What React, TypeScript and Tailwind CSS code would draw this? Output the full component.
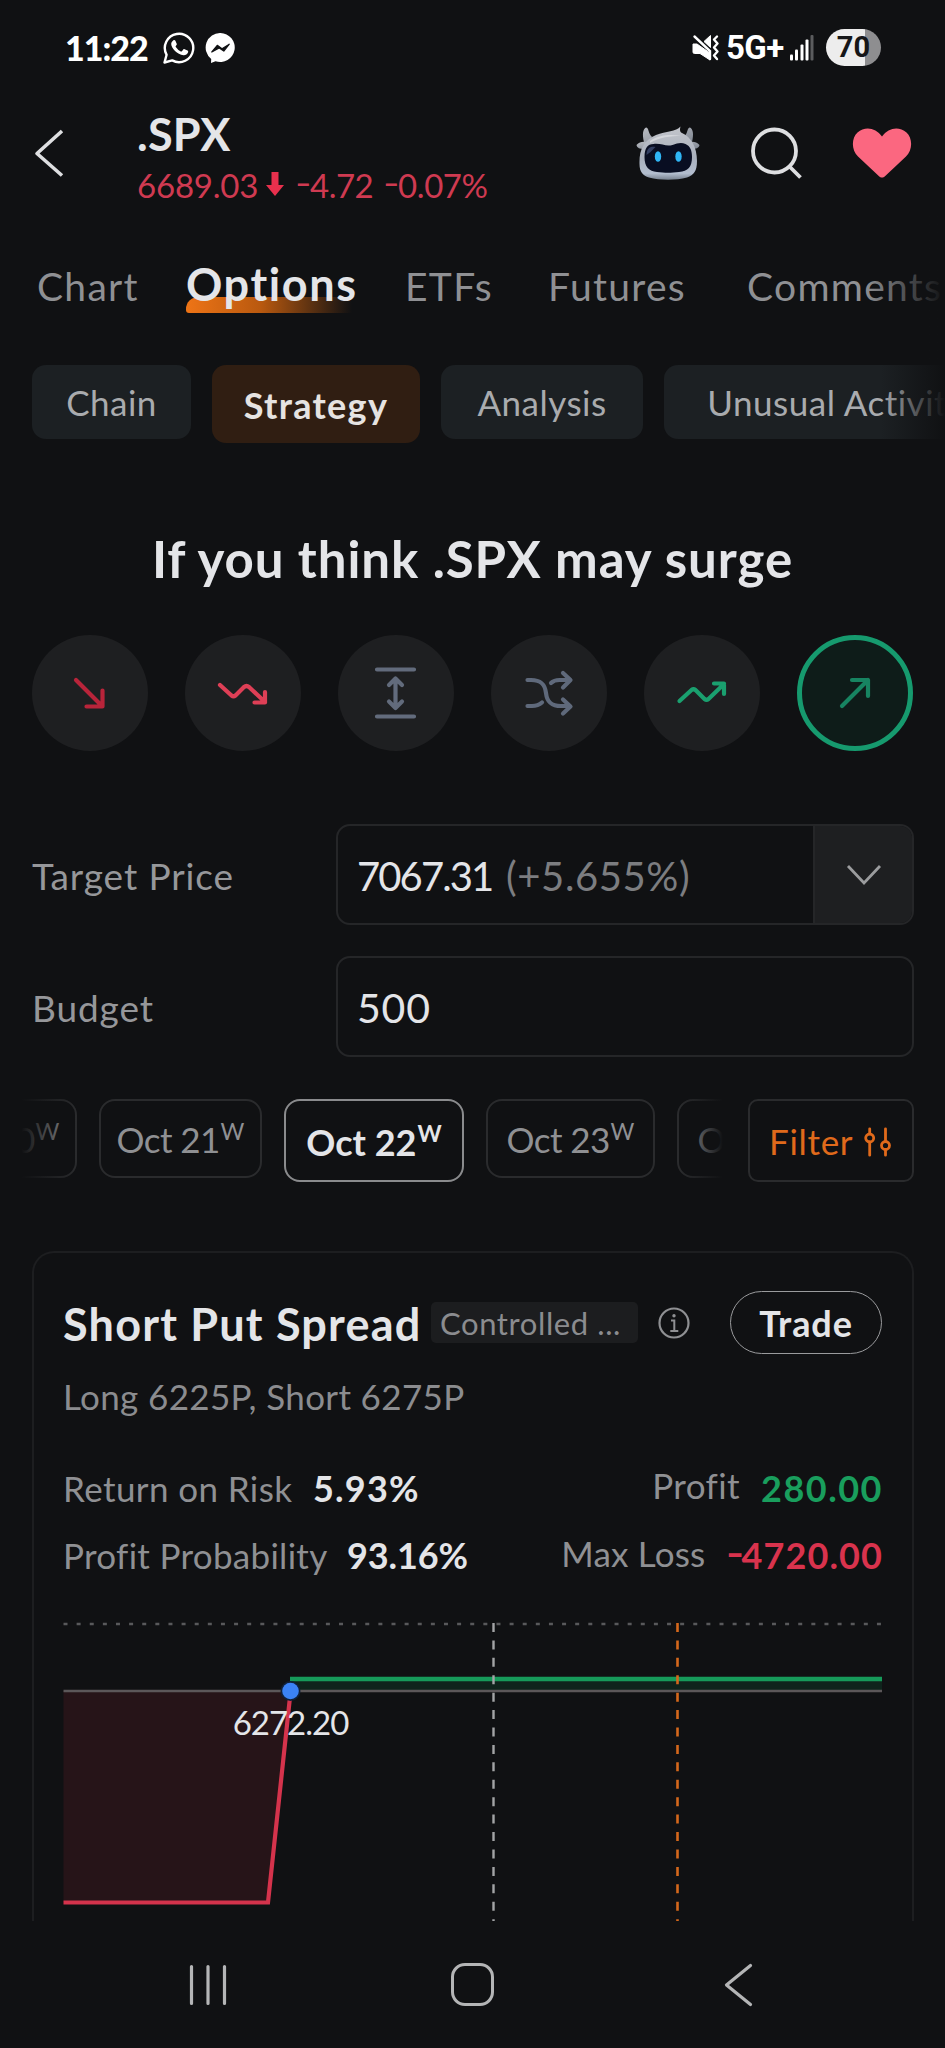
import React from "react";

const circle =
  "flex h-[116px] w-[116px] items-center justify-center rounded-full bg-[#1e1f21]";

function StatusBar() {
  return (
    <div className="flex h-[95px] items-center pl-[65px] pr-[64px] text-white">
      <span className="w-[98px] text-[34px] font-black leading-none tracking-[-1px]">11:22</span>
      <svg width="32" height="32" viewBox="0 0 32 32" fill="none">
        <path
          d="M1.5 30.5 3.6 22.8A14.2 14.2 0 1 1 9.2 28.4Z"
          stroke="#fff"
          strokeWidth="2.4"
          strokeLinejoin="round"
        />
        <path
          d="M10.2 8.4c.8-.7 1.8-.5 2.2.3l1.3 3c.3.7 0 1.2-.9 2.3-.3.4-.3.7 0 1.1a11 11 0 0 0 5 4.300c.5.2.8.1 1.100-.2l1.400-1.700c.4-.5.8-.5 1.300-.3l2.900 1.400c.8.4.8.8.5 1.900-.5 1.700-2.700 2.900-4.500 2.700-6.300-.8-12.100-6.600-12.300-11.200 0-1.500.9-2.800 2-3.600Z"
          fill="#fff"
        />
      </svg>
      <svg className="ml-[10px]" width="31" height="30" viewBox="0 0 31 30">
        <path
          d="M15.500 0a14.500 14.500 0 1 1-5 28.200L6 29.900l.2-4A14.500 14.500 0 0 1 15.500 0Z"
          fill="#fff"
        />
        <path
          d="M6.800 19 12.300 12.300 17 15.800 24.300 11.200 18.800 18.100 14.200 14.900Z"
          fill="#101113"
          stroke="#101113"
          strokeWidth="1.200"
          strokeLinejoin="round"
        />
      </svg>
      <div className="ml-auto flex items-center">
        <svg width="28" height="28" viewBox="0 0 28 28" fill="none" stroke="#fff">
          <path d="M1 10h4l13 9v7L8 19.500H2.500Q1 19.500 1 18Z" fill="#fff" strokeWidth="1" strokeLinejoin="round" />
          <path d="M12 7.500 18.500 1.500v12Z" fill="#fff" strokeWidth="1" strokeLinejoin="round" />
          <path d="M2.500 2.500 18 17v8" strokeWidth="2.400" strokeLinecap="round" />
          <path d="m25 2.500-3 3 3.500 4-3.500 4 3.500 4-3.500 4 3 3.500" strokeWidth="2.400" strokeLinecap="round" strokeLinejoin="round" />
        </svg>
        <span className="ml-[6px] w-[60px] font-[Roboto] text-[33px] font-bold leading-none tracking-[-0.6px]">5G+</span>
        <svg className="ml-[3px]" width="26" height="28" viewBox="0 0 26 28" fill="#fff">
          <rect x="1" y="20.500" width="3" height="6" rx="1" />
          <rect x="6" y="15.500" width="3" height="11" rx="1" />
          <rect x="11.500" y="10.500" width="3" height="16" rx="1" />
          <rect x="16.500" y="5.500" width="3" height="21" rx="1" />
          <rect x="21.500" y="1" width="3" height="25.500" rx="1" fill="#5b5c5e" />
        </svg>
        <div className="ml-[11px] flex h-[37px] w-[55px] items-center justify-center rounded-full bg-[linear-gradient(90deg,#ededed_70%,#8e8e90_70%)] font-[Roboto] text-[29px] font-bold leading-none text-[#151618]">
          70
        </div>
      </div>
    </div>
  );
}

function RobotIcon() {
  return (
    <svg width="64" height="54" viewBox="0 0 64 54">
      <defs>
        <linearGradient id="shell" x1="0" y1="0" x2="0" y2="1">
          <stop offset="0" stopColor="#c3c5cb" />
          <stop offset="0.6" stopColor="#a9b0bd" />
          <stop offset="0.88" stopColor="#b3becf" />
          <stop offset="1" stopColor="#77818f" />
        </linearGradient>
        <linearGradient id="horn" x1="0" y1="0" x2="1" y2="1">
          <stop offset="0" stopColor="#b9bcc2" />
          <stop offset="1" stopColor="#7d8490" />
        </linearGradient>
      </defs>
      <path d="M8 16C6 8 7 3 10 1.500c3 0 2 6 6 9.500l-5 8ZM56 16c2-8 1-13-2-14.500-3 0-2 6-6 9.500l5 8Z" fill="url(#horn)" />
      <path d="M.5 19C4 15 9 15 13 17l-5 6C4 23 1 22 .5 19ZM63.500 19C60 15 55 15 51 17l5 6c4 0 7-1 7.500-4Z" fill="url(#horn)" />
      <path
        d="M3.500 38C3 24 8 14 20 9 30 5 40 6 44.500.5 43.500 4 44 6 46 7c9 4 15 14 15 28 0 10-3 14-10 16.500-11 3-27 3-38 0C7 49.500 3.500 46 3.500 38Z"
        fill="url(#shell)"
      />
      <path d="M14 15c8-6 20-7 31-5-10 0-22 1-31 7Z" fill="#dfe1e5" opacity="0.7" />
      <path
        d="M8.500 31c0-9 3-13 9-13 8-1 12 3 19 1 5-2 9-3 13-1 5 2 6.500 7 6.500 13 0 10-4 14-13 15-8 1-14 1-22 0-8-1-12.500-5-12.500-15Z"
        fill="#090e22"
      />
      <path d="M10.500 29c0-7 4-9 9-8l-5 5Z" fill="#44537c" opacity="0.7" />
      <ellipse cx="22" cy="30.500" rx="3.200" ry="5.300" fill="#2fb5f5" />
      <ellipse cx="42.500" cy="30.500" rx="3.200" ry="5.300" fill="#2fb5f5" />
    </svg>
  );
}

function Header() {
  return (
    <header className="flex h-[116px] items-center pl-[34px] pr-[33px]">
      <svg width="31" height="50" viewBox="0 0 31 50" fill="none" stroke="#dedfe1" strokeWidth="3.600">
        <path d="M28 3 3 25.500 28 47.500" strokeLinejoin="round" />
      </svg>
      <div className="ml-[72px] mt-3 w-[499px]">
        <h1 className="relative top-[1px] text-[45px] font-bold leading-[52px] tracking-[0.2px] text-[#e4e5e8]">.SPX</h1>
        <div className="flex items-center text-[33px] leading-[52px] text-[#cf3a51]">
          <span className="w-[129px] tracking-[-0.2px]">6689.03</span>
          <svg width="18" height="24" viewBox="0 0 18 24" className="mb-[3px]">
            <path d="M5.500 0h7v13H18L9 24 0 13h5.500Z" fill="#e8304d" />
          </svg>
          <span className="ml-[11px] w-[88px] tracking-[-0.5px]"><Minus />4.72</span>
          <span className="tracking-[-0.4px]"><Minus />0.07%</span>
        </div>
      </div>
      <RobotIcon />
      <svg className="ml-[50px]" width="53" height="54" viewBox="0 0 53 54" fill="none" stroke="#dedfe1" strokeWidth="3.800">
        <circle cx="24.500" cy="25" r="21.500" />
        <path d="m39 40 11.500 11.500" />
      </svg>
      <svg className="ml-[49px]" width="60" height="50" viewBox="0 0 60 50">
        <path
          d="M30 49.500c-1.500 0-2.500-.8-3.500-1.800L6 28.500C-1 21.500-.5 10 5.500 4.500 13-2 23.500-.5 30 8.500 36.500-.5 47-2 54.500 4.500c6 5.500 6.500 17-.5 24L33.500 47.700c-1 1-2 1.800-3.500 1.800Z"
          fill="#fb6780"
        />
      </svg>
    </header>
  );
}

function Minus() {
  return <span className="inline-block w-[15px] origin-left -translate-y-[3px] scale-x-[1.35]">-</span>;
}

function Tabs() {
  return (
    <nav className="relative flex h-[154px] items-baseline overflow-hidden pl-[37px] pt-[43px] text-[39px] leading-[60px] tracking-[1.3px] text-[#8f9093]">
      <span className="w-[149px] shrink-0">Chart</span>
      <span className="relative w-[219px] shrink-0 text-[45px] font-bold tracking-[1.6px] text-[#e4e5e8]">
        <span className="absolute left-0 top-[43px] h-[16px] w-[166px] rounded-tl-[12px] rounded-bl-[3px] bg-[linear-gradient(90deg,#ee7416,#b9590f_45%,#101113)]" />
        <span className="relative">Options</span>
      </span>
      <span className="w-[143px] shrink-0">ETFs</span>
      <span className="w-[199px] shrink-0">Futures</span>
      <span className="shrink-0">Comments</span>
      <span className="absolute right-0 top-0 h-full w-[80px] bg-gradient-to-r from-[#101113]/0 to-[#101113]" />
    </nav>
  );
}

function Chips() {
  const chip = "flex h-[74px] shrink-0 items-center justify-center rounded-[14px] bg-[#1c2023]";
  return (
    <div className="relative flex h-[78px] items-start gap-[21px] overflow-hidden pl-[32px] text-[35px] leading-none tracking-[0.5px] text-[#a9abae]">
      <span className={`${chip} w-[159px]`}>Chain</span>
      <span className="flex h-[78px] w-[208px] shrink-0 items-center justify-center rounded-[14px] bg-[#301e12] pt-[2px] text-[36px] font-bold tracking-[1.3px] text-[#e6e3e1]">
        Strategy
      </span>
      <span className={`${chip} w-[202px]`}>Analysis</span>
      <span className={`${chip} w-[345px]`}>Unusual Activity</span>
      <span className="absolute right-0 top-0 h-full w-[64px] bg-gradient-to-r from-[#101113]/0 to-[#101113]" />
    </div>
  );
}

function Outlooks() {
  const line = { fill: "none", strokeWidth: 4.2, strokeLinecap: "round" as const, strokeLinejoin: "round" as const };
  return (
    <div className="flex justify-between px-[32px]">
      <div className={circle}>
        <svg width="116" height="116" viewBox="0 0 116 116" {...line} stroke="#b9243a">
          <path d="m44 45 26 26M54.500 71.500h16V55.500" />
        </svg>
      </div>
      <div className={circle}>
        <svg width="116" height="116" viewBox="0 0 116 116" {...line} stroke="#de3f56">
          <path d="m35 50 11.500 10.500q2 1.500 4 0L59 52q2.500-2 5 0l16 15M69.500 67.500H80V57" />
        </svg>
      </div>
      <div className={circle}>
        <svg width="116" height="116" viewBox="0 0 116 116" {...line} stroke="#626b7c">
          <path d="M39 34.500h37M39 81.500h37M57.500 44v28M51 50l6.500-6.500L64 50M51 66.500l6.500 6.500 6.500-6.500" />
        </svg>
      </div>
      <div className={circle}>
        <svg width="116" height="116" viewBox="0 0 116 116" {...line} stroke="#5f697b">
          <path d="M36.500 45H40C50 45 54 49 55 58S60 71 70 71h9M36.500 71H41q6 0 10-3.500M60 48q3-3 8.500-3H79M72 38l7.500 7-7.500 7.500M72 64.500l7.500 7-7.500 7" />
        </svg>
      </div>
      <div className={circle}>
        <svg width="116" height="116" viewBox="0 0 116 116" {...line} stroke="#1aa06f">
          <path d="m35.500 66 12-11q2-1.500 4 0l9 9q2 1.500 4 0L80 49M70 48.500h10V59" />
        </svg>
      </div>
      <div className="flex h-[116px] w-[116px] items-center justify-center rounded-full border-[5px] border-[#169a6e] bg-[#0e1c19]">
        <svg width="106" height="106" viewBox="5 5 106 106" {...line} stroke="#178461">
          <path d="m45 71 26-26M55 45h16v16" />
        </svg>
      </div>
    </div>
  );
}

function Fields() {
  return (
    <div className="mt-[73px] flex flex-col gap-[31px] pl-[32px] pr-[31px] text-[37px] leading-none text-[#96979a]">
      <div className="flex h-[101px] items-center">
        <span className="w-[304px] pt-[2px] tracking-[0.9px]">Target Price</span>
        <div className="flex h-full flex-1 overflow-hidden rounded-[14px] border-2 border-[#252628]">
          <div className="flex flex-1 items-center pl-[19px] pt-[2px] text-[40px]">
            <span className="w-[149px] tracking-[-1.9px] text-[#e4e5e8]">7067.31</span>
            <span className="tracking-[0.6px] text-[#7c7d80]">(+5.655%)</span>
          </div>
          <div className="flex w-[99px] items-center justify-center border-l-2 border-[#252628] bg-[#1e1f21]">
            <svg width="36" height="22" viewBox="0 0 36 22" fill="none" stroke="#9b9c9e" strokeWidth="2.800">
              <path d="m2 2 16 17L34 2" />
            </svg>
          </div>
        </div>
      </div>
      <div className="flex h-[101px] items-center">
        <span className="w-[304px] pt-[2px] tracking-[0.9px]">Budget</span>
        <div className="flex h-full flex-1 items-center rounded-[14px] border-2 border-[#252628] pl-[19px] pt-[2px] text-[41px] tracking-[0.8px] text-[#e4e5e8]">
          500
        </div>
      </div>
    </div>
  );
}

function Weekly({ bold = false }: { bold?: boolean }) {
  return (
    <span className={`relative top-[-8px] ml-[1px] text-[23px] tracking-normal ${bold ? "font-bold" : "font-normal"}`}>
      W
    </span>
  );
}

function Expirations() {
  const pill = "flex h-[79px] shrink-0 items-center justify-center rounded-[16px] border-2 border-[#2a2b2d] pt-[2px] tracking-[-0.6px]";
  return (
    <div className="mt-[42px] flex h-[83px] pr-[31px] text-[35px] leading-none text-[#8f9093]">
      <div className="relative flex w-[725px] items-start gap-[22px] overflow-hidden">
        <div className={`${pill} -ml-[86px] w-[163px]`}>Oct 20<Weekly /></div>
        <div className={`${pill} w-[163px]`}>Oct 21<Weekly /></div>
        <div className="flex h-[83px] w-[180px] shrink-0 items-center justify-center rounded-[16px] border-2 border-[#8a8b8d] pt-[2px] text-[36px] font-bold text-[#e4e5e8]">
          Oct 22<Weekly bold />
        </div>
        <div className={`${pill} w-[169px]`}>Oct 23<Weekly /></div>
        <div className={`${pill} w-[169px]`}>Oct 24<Weekly /></div>
        <span className="absolute left-0 top-0 h-full w-[77px] bg-[linear-gradient(90deg,#101113_28%,transparent)]" />
        <span className="absolute right-0 top-0 h-full w-[44px] bg-[linear-gradient(90deg,transparent,#101113_95%)]" />
      </div>
      <div className="ml-auto flex h-[83px] w-[166px] items-center rounded-[10px] border-2 border-[#2a2b2d] pl-[19px] pt-[2px] text-[35px] text-[#e06a1b]">
        <span className="w-[95px] tracking-[0.7px]">Filter</span>
        <svg width="28" height="30" viewBox="0 0 28 30" fill="none" stroke="#e06a1b" strokeWidth="2.800" strokeLinecap="round">
          <circle cx="5.700" cy="11" r="4" />
          <path d="M5.700 1.800v5M5.700 15v13.200" />
          <circle cx="21.500" cy="18.500" r="4" />
          <path d="M21.500 1.800v12.500M21.500 22.800v5.400" />
        </svg>
      </div>
    </div>
  );
}

function PayoffChart() {
  return (
    <svg className="-ml-[1px] block" width="822" height="333" viewBox="62 1588 822 333">
      <path d="M63.500 1624H883" stroke="#58595b" strokeWidth="2.600" strokeDasharray="4 9.120" />
      <path d="M63.500 1691H290L268 1902H63.500Z" fill="#261418" />
      <path d="M290 1679H882v12H290Z" fill="#0f241c" />
      <path d="M63.500 1691H882" stroke="#5b5759" strokeWidth="2.600" />
      <path d="M290 1679H882" stroke="#169a5a" strokeWidth="4.400" />
      <path d="M63.500 1902.500H268L290 1697" fill="none" stroke="#d5334c" strokeWidth="4.200" />
      <path d="M493.500 1623V1921" stroke="#a3a4a6" strokeWidth="2.400" strokeDasharray="9 8.420" />
      <path d="M677.500 1623V1921" stroke="#d5681c" strokeWidth="2.600" strokeDasharray="9 8.420" />
      <circle cx="290.500" cy="1691" r="10" fill="#10203a" />
      <circle cx="290.500" cy="1691" r="8.300" fill="#3b82f6" />
      <text x="290.500" y="1735" textAnchor="middle" fontSize="33" fill="#e4e5e8" letterSpacing="-1">
        6272.20
      </text>
    </svg>
  );
}

function StrategyCard() {
  return (
    <section className="mt-[69px] ml-[32px] h-[670px] w-[882px] overflow-hidden rounded-t-[22px] border-2 border-b-0 border-[#1d1e20] pl-[29px] pr-[30px] pt-[38px]">
      <div className="flex h-[63px] items-center">
        <h3 className="w-[368px] whitespace-nowrap pt-[3px] text-[45px] font-bold leading-none tracking-[1.2px] text-[#e4e5e8]">Short Put Spread</h3>
        <span className="flex h-[41px] w-[207px] items-center rounded-[5px] bg-[#1c1d1f] pl-[9px] pt-[2px] text-[31px] leading-none tracking-[0.6px] text-[#8b8c8f]">
          Controlled ...
        </span>
        <svg className="ml-[20px]" width="32" height="32" viewBox="0 0 32 32" fill="none" stroke="#8f9093">
          <circle cx="16" cy="16" r="14.500" strokeWidth="2.200" />
          <path d="M13 13.500h3.300v10M12.300 24h8" strokeWidth="2" />
          <circle cx="16" cy="8.800" r="1.700" fill="#8f9093" stroke="none" />
        </svg>
        <button className="ml-auto h-[63px] w-[152px] rounded-full border border-[#9a9b9d] pt-px text-[36px] font-bold leading-none tracking-[0.9px] text-[#e4e5e8]">
          Trade
        </button>
      </div>
      <p className="mt-[12px] text-[35px] leading-[60px] tracking-[0.35px] text-[#8b8c8f]">Long 6225P, Short 6275P</p>
      <div className="mt-[28px] text-[35px] leading-[67px] tracking-[0.4px] text-[#8f9093]">
        <div className="flex h-[67px]">
          <span className="w-[250px] pt-px">Return on Risk</span>
          <b className="pt-px text-[36px] font-bold tracking-[1.2px] text-[#e4e5e8]">5.93%</b>
          <span className="-mt-[2px] ml-auto">Profit</span>
          <b className="-mr-[1px] ml-[21px] pt-px text-[36px] font-bold tracking-[1.5px] text-[#199e5d]">280.00</b>
        </div>
        <div className="flex h-[67px]">
          <span className="w-[284px] pt-px tracking-[0.3px]">Profit Probability</span>
          <b className="pt-px text-[36px] font-bold tracking-[-0.1px] text-[#e4e5e8]">93.16%</b>
          <span className="-mt-[1px] ml-auto tracking-[0.2px]">Max Loss</span>
          <b className="-mr-[1px] ml-[21px] pt-px text-[36px] font-bold tracking-[1.1px] text-[#d9334d]"><Minus />4720.00</b>
        </div>
      </div>
      <PayoffChart />
    </section>
  );
}

function SystemNav() {
  return (
    <div className="flex h-[127px] items-center pl-[187px] pr-[191px]">
      <svg width="42" height="44" viewBox="0 0 42 44" stroke="#b4b5b6" strokeWidth="3.200" strokeLinecap="round">
        <path d="M4.500 3.500v37M21 3.500v37M37.500 3.500v37" />
      </svg>
      <div className="ml-[222px] h-[43px] w-[43px] rounded-[14px] border-[3.500px] border-[#b4b5b6]" />
      <svg className="ml-auto" width="31" height="46" viewBox="0 0 31 46" fill="none" stroke="#b4b5b6" strokeWidth="3.200" strokeLinecap="round" strokeLinejoin="round">
        <path d="M27.500 3.500 3.500 23l24 19.500" />
      </svg>
    </div>
  );
}

export default function App() {
  return (
    <div className="h-[2048px] w-[945px] overflow-hidden bg-[#101113] font-[Lato,sans-serif]">
      <StatusBar />
      <Header />
      <Tabs />
      <Chips />
      <h2 className="h-[192px] pt-[86px] text-center text-[51px] font-bold leading-[60px] tracking-[0.95px] text-[#e4e5e8]">
        If you think .SPX may surge
      </h2>
      <Outlooks />
      <Fields />
      <Expirations />
      <StrategyCard />
      <SystemNav />
    </div>
  );
}
